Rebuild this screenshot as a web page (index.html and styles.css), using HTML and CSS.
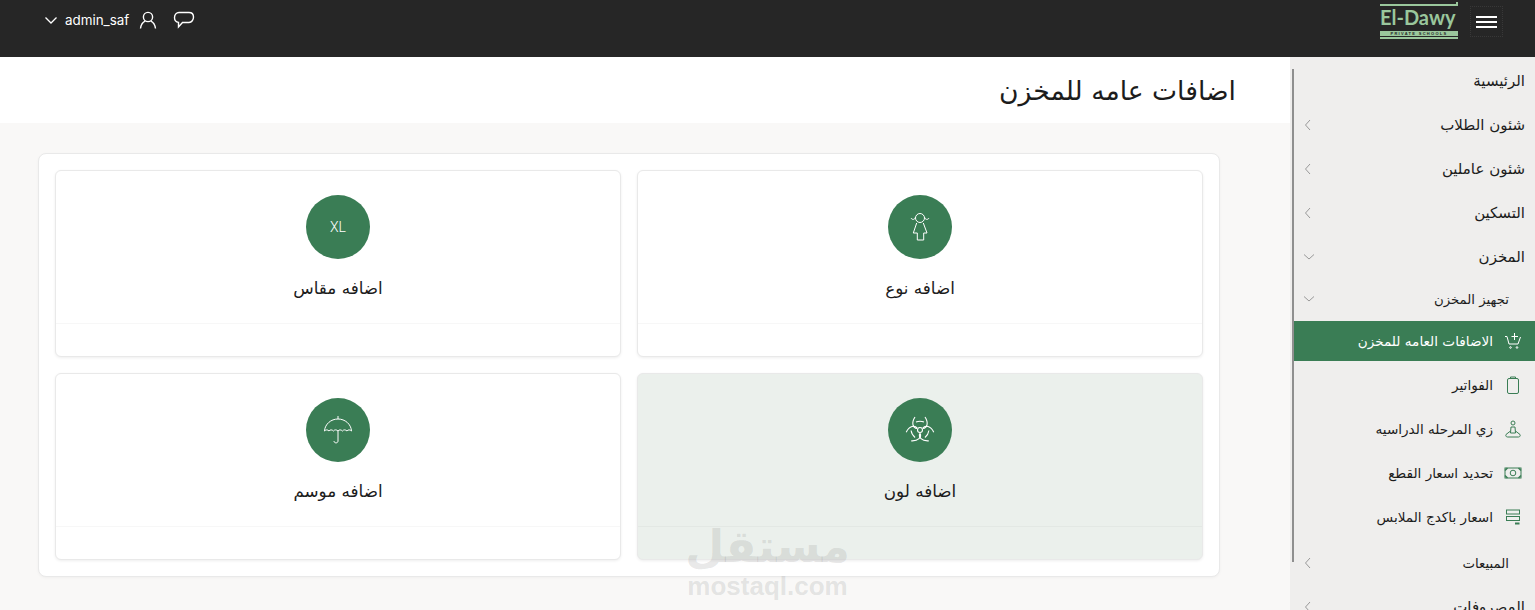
FILE: index.html
```html
<!DOCTYPE html>
<html lang="ar" dir="rtl">
<head>
    <meta charset="UTF-8">
    <meta name="viewport" content="width=device-width, initial-scale=1.0">
    <title>اضافات عامه للمخزن</title>
    <link rel="stylesheet" href="styles.css">
</head>
<body>
    <!-- Top bar -->
    <header class="topbar">
        <div class="brand">
            <button class="burger" aria-label="menu"><span></span><span></span><span></span></button>
            <div class="logo">
                <div class="logo-line logo-line--top"></div>
                <div class="logo-name" dir="ltr">El-Dawy</div>
                <div class="logo-sub" dir="ltr">PRIVATE SCHOOLS</div>
                <div class="logo-line logo-line--thin"></div>
            </div>
        </div>
        <div class="user-tools" dir="ltr">
            <svg class="tool-chevron" width="14" height="14" viewBox="0 0 14 14" fill="none" stroke="currentColor" stroke-width="1.3"><path d="M1.500 4.500 7 10l5.500-5.500"/></svg>
            <span class="user-name">admin_saf</span>
            <svg class="tool-user" width="18" height="18" viewBox="0 0 18 18" fill="none" stroke="currentColor" stroke-width="1.4"><circle cx="9" cy="6" r="4.600"/><path d="M1.500 17.500c.6-4 3-6.600 4.600-7.300M16.500 17.500c-.6-4-3-6.600-4.600-7.300"/></svg>
            <svg class="tool-chat" width="22" height="18" viewBox="0 0 22 18" fill="none" stroke="currentColor" stroke-width="1.4"><path d="M6 1.500h10c2.800 0 4.500 1.800 4.500 4.500S18.800 11.500 16 11.500H9.500L5.500 16v-4.600C3 11 1.500 9 1.500 6.500 1.500 3.500 3.500 1.500 6 1.500z"/></svg>
        </div>
    </header>

    <div class="layout">
        <!-- Side menu -->
        <aside class="sidebar">
            <div class="side-rail"></div>
            <nav class="menu">
                <a class="menu-item">الرئيسية</a>
                <a class="menu-item">شئون الطلاب<svg class="arrow" width="8" height="12" viewBox="0 0 8 12" fill="none" stroke="currentColor"><path d="M6 1 1.500 6 6 11"/></svg></a>
                <a class="menu-item">شئون عاملين<svg class="arrow" width="8" height="12" viewBox="0 0 8 12" fill="none" stroke="currentColor"><path d="M6 1 1.500 6 6 11"/></svg></a>
                <a class="menu-item">التسكين<svg class="arrow" width="8" height="12" viewBox="0 0 8 12" fill="none" stroke="currentColor"><path d="M6 1 1.500 6 6 11"/></svg></a>
                <a class="menu-item">المخزن<svg class="arrow arrow--down" width="12" height="8" viewBox="0 0 12 8" fill="none" stroke="currentColor"><path d="M1 1.500 6 6l5-4.500"/></svg></a>
                <a class="menu-item menu-item--sub">تجهيز المخزن<svg class="arrow arrow--down" width="12" height="8" viewBox="0 0 12 8" fill="none" stroke="currentColor"><path d="M1 1.500 6 6l5-4.500"/></svg></a>

                <a class="menu-link menu-link--active">
                    <svg width="18" height="18" viewBox="0 0 18 18" fill="none" stroke="currentColor"><path d="M1 4.500h2l2 7.500h9l2.500-7"/><path d="M10.500 1v7M7.500 4.500h6.500"/><circle cx="6.500" cy="15.500" r=".8"/><circle cx="13" cy="15.500" r=".8"/></svg>
                    الاضافات العامه للمخزن
                </a>
                <a class="menu-link">
                    <svg width="18" height="18" viewBox="0 0 18 18" fill="none" stroke="#3a7d55"><rect x="3.500" y="2.500" width="11" height="15" rx="1.500"/><path d="M6.500 2.500V1h5v1.500"/></svg>
                    الفواتير
                </a>
                <a class="menu-link">
                    <svg width="18" height="18" viewBox="0 0 18 18" fill="none" stroke="#3a7d55"><circle cx="9" cy="3" r="2"/><path d="M7 7h4l.5 6h-5z"/><path d="M6.500 11 2 14.500c-.6 1 0 2.500 1.500 2.500h11c1.500 0 2.100-1.500 1.500-2.500L11.500 11"/></svg>
                    زي المرحله الدراسيه
                </a>
                <a class="menu-link">
                    <svg width="18" height="18" viewBox="0 0 18 18" fill="none" stroke="#3a7d55"><rect x="1" y="4" width="16" height="10"/><circle cx="9" cy="9" r="2.800"/><path d="M1 6.500 3.500 4M14.500 4 17 6.500M1 11.500 3.500 14M14.500 14 17 11.500" stroke-width="1.500"/></svg>
                    تحديد اسعار القطع
                </a>
                <a class="menu-link">
                    <svg width="18" height="18" viewBox="0 0 18 18" fill="none" stroke="#3a7d55"><rect x="2.500" y="2" width="13" height="4"/><rect x="2.500" y="8.500" width="13" height="4"/><path d="M11 15.500h4.500" stroke-width="2"/></svg>
                    اسعار باكدج الملابس
                </a>

                <a class="menu-item menu-item--sub menu-item--gap">المبيعات<svg class="arrow" width="8" height="12" viewBox="0 0 8 12" fill="none" stroke="currentColor"><path d="M6 1 1.500 6 6 11"/></svg></a>
                <a class="menu-item">المصروفات<svg class="arrow" width="8" height="12" viewBox="0 0 8 12" fill="none" stroke="currentColor"><path d="M6 1 1.500 6 6 11"/></svg></a>
            </nav>
        </aside>

        <main class="content">
            <div class="page-head">
                <h1 class="page-title">اضافات عامه للمخزن</h1>
            </div>
            <section class="panel">
                <div class="card-grid">
                    <article class="card">
                        <div class="card-body">
                            <div class="card-icon">
                                <svg width="20" height="30" viewBox="0 0 20 30" fill="none" stroke="currentColor"><circle cx="10" cy="6" r="4.500"/><path d="M5.500 5C5 8 2 8 1 6M14.500 5C15 8 18 8 19 6"/><path d="M6.700 11 3.300 21h4v7h6.400v-7h3.300l-3.700-10"/></svg>
                            </div>
                            <h2 class="card-title">اضافه نوع</h2>
                        </div>
                        <div class="card-foot"></div>
                    </article>
                    <article class="card">
                        <div class="card-body">
                            <div class="card-icon card-icon--text">XL</div>
                            <h2 class="card-title">اضافه مقاس</h2>
                        </div>
                        <div class="card-foot"></div>
                    </article>
                    <article class="card card--hover">
                        <div class="card-body">
                            <div class="card-icon">
                                <svg width="30" height="30" viewBox="0 0 30 30" fill="none" stroke="currentColor" stroke-width="1.100">
                                    <defs>
                                        <g id="horn"><path d="M10 2C6 8 8 13 12 13.500M20 2C24 8 22 13 18 13.500M11 7c2.500-1 5.500-1 8 0"/></g>
                                    </defs>
                                    <use href="#horn"/>
                                    <use href="#horn" transform="rotate(120 15 15)"/>
                                    <use href="#horn" transform="rotate(240 15 15)"/>
                                    <circle cx="15" cy="15" r="2.500"/>
                                </svg>
                            </div>
                            <h2 class="card-title">اضافه لون</h2>
                        </div>
                        <div class="card-foot"></div>
                    </article>
                    <article class="card">
                        <div class="card-body">
                            <div class="card-icon">
                                <svg width="30" height="30" viewBox="0 0 30 30" fill="none" stroke="currentColor"><path d="M15 1v3"/><path d="M1.500 16C2 9 8 4 15 4s13 5 13.500 12c-1.500-1.500-3.500-1.500-4.500 0-1.500-1.500-3.500-1.500-4.500 0-1.500-1.500-3.500-1.500-4.500 0-1.500-1.500-3.500-1.500-4.500 0-1.500-1.500-3.500-1.500-4.500 0-1.500-1.500-3-1.500-4.500 0z"/><path d="M15 16v10c0 2.500-4 2.500-4 0"/></svg>
                            </div>
                            <h2 class="card-title">اضافه موسم</h2>
                        </div>
                        <div class="card-foot"></div>
                    </article>
                </div>
            </section>
        </main>
    </div>

    <!-- Site watermark over the shot -->
    <div class="watermark">
        <div class="watermark-ar">مستقل</div>
        <div class="watermark-en" dir="ltr">mostaql.com</div>
    </div>
</body>
</html>
```

FILE: styles.css
```css
:root {
    --bar-bg: #262626;
    --green: #3a7d55;
    --side-bg: #efeeed;
    --page-bg: #f9f8f7;
    --line: #e9e9e9;
    --text: #1c1c1c;
    --logo: #9ac79c;
}

*, *::before, *::after {
    box-sizing: border-box;
    margin: 0;
    padding: 0;
}

html, body {
    height: 100%;
    overflow: hidden;
}

body {
    font-family: "DejaVu Sans", sans-serif;
    background-color: var(--page-bg);
    color: var(--text);
    position: relative;
}

.topbar {
    height: 57px;
    background-color: var(--bar-bg);
    color: #fff;
    display: flex;
    justify-content: space-between;
    align-items: flex-start;
    padding: 0 32px 0 44px;
}

.brand {
    display: flex;
    align-items: flex-start;
    gap: 12px;
}

.burger {
    width: 33px;
    height: 31px;
    margin-top: 6px;
    background: none;
    border: 1px dotted #383838;
    display: flex;
    flex-direction: column;
    align-items: center;
    justify-content: center;
    gap: 3px;
}

.burger span {
    display: block;
    width: 21px;
    height: 2px;
    background-color: #fff;
}

.logo {
    width: 78px;
    padding-top: 4px;
    color: var(--logo);
}

.logo-line {
    height: 2px;
    background-color: var(--logo);
}

.logo-line--top {
    position: relative;
}

.logo-line--top::after {
    content: "";
    position: absolute;
    right: 0;
    top: -2px;
    width: 2px;
    height: 2px;
    background-color: var(--logo);
}

.logo-line--thin {
    margin-top: 1px;
}

.logo-name {
    font-family: "Lato", sans-serif;
    font-size: 20px;
    font-weight: 700;
    line-height: 21px;
    margin-top: 1px;
    white-space: nowrap;
}

.logo-sub {
    background-color: var(--logo);
    color: var(--bar-bg);
    font-family: "Liberation Sans", sans-serif;
    font-size: 4px;
    font-weight: 700;
    letter-spacing: 1.300px;
    line-height: 5px;
    height: 5px;
    margin-top: 3px;
    text-align: center;
    white-space: nowrap;
    overflow: hidden;
}

.user-tools {
    display: flex;
    align-items: center;
    height: 40px;
}

.tool-chevron {
    margin-right: 7px;
}

.user-name {
    margin-right: 10px;
    font-family: "Inter", sans-serif;
    font-size: 13.400px;
}

.tool-chat {
    margin-left: 16px;
}

.layout {
    height: 553px;
    display: flex;
}

.sidebar {
    width: 245px;
    flex: none;
    background-color: var(--side-bg);
    position: relative;
    overflow: hidden;
}

.side-rail {
    position: absolute;
    left: 2px;
    top: 12px;
    width: 2px;
    height: 493px;
    background-color: #8f8f8f;
}

.menu {
    padding-top: 2px;
}

.menu-item {
    height: 44px;
    display: flex;
    align-items: center;
    padding-right: 10px;
    font-size: 15px;
    color: var(--text);
    position: relative;
}

.menu-item--sub {
    height: 40px;
    padding-right: 26px;
    font-size: 13.300px;
}

.menu-item--gap {
    height: 44px;
    margin-top: 2px;
}

.arrow {
    position: absolute;
    left: 14px;
    top: 50%;
    margin-top: -6px;
    color: #999;
}

.arrow--down {
    left: 13px;
    margin-top: -4px;
}

.menu-link {
    height: 44px;
    margin-left: 4px;
    display: flex;
    align-items: center;
    gap: 11px;
    padding-right: 13px;
    font-size: 13.600px;
    color: var(--text);
}

.menu-link--active {
    height: 40px;
    margin-top: 2px;
    margin-bottom: 2px;
    background-color: var(--green);
    color: #fff;
}

.content {
    flex: 1;
    min-width: 0;
}

.page-head {
    height: 66px;
    background-color: #fff;
    padding: 0 54px;
    display: flex;
    align-items: center;
}

.page-title {
    font-size: 26.600px;
    font-weight: 400;
}

.panel {
    margin: 30px 70px 0 38px;
    padding: 16px;
    background-color: #fff;
    border: 1px solid var(--line);
    border-radius: 8px;
    box-shadow: 0 1px 3px rgba(0, 0, 0, 0.04);
}

.card-grid {
    display: grid;
    grid-template-columns: 1fr 1fr;
    gap: 16px;
}

.card {
    height: 187px;
    background-color: #fff;
    border: 1px solid var(--line);
    border-radius: 6px;
    box-shadow: 0 1px 3px rgba(0, 0, 0, 0.07);
    display: flex;
    flex-direction: column;
}

.card--hover {
    background-color: #ebf0ec;
}

.card-body {
    height: 153px;
    padding-top: 24px;
    border-bottom: 1px solid rgba(0, 0, 0, 0.03);
    display: flex;
    flex-direction: column;
    align-items: center;
}

.card-icon {
    width: 64px;
    height: 64px;
    border-radius: 50%;
    background-color: var(--green);
    color: #fff;
    display: flex;
    align-items: center;
    justify-content: center;
}

.card-icon--text {
    font-family: "Roboto", sans-serif;
    font-weight: 300;
    font-size: 14px;
}

.card-title {
    margin-top: 17px;
    font-size: 16.800px;
    font-weight: 400;
    line-height: 24px;
}

.watermark {
    position: absolute;
    left: 680px;
    top: 520px;
    width: 175px;
    text-align: center;
    color: rgba(120, 120, 120, 0.18);
    font-weight: 700;
    pointer-events: none;
}

.watermark-ar {
    font-size: 45px;
    line-height: 54px;
}

.watermark-en {
    font-family: "Liberation Sans", sans-serif;
    font-size: 26px;
    line-height: 24px;
}
```
